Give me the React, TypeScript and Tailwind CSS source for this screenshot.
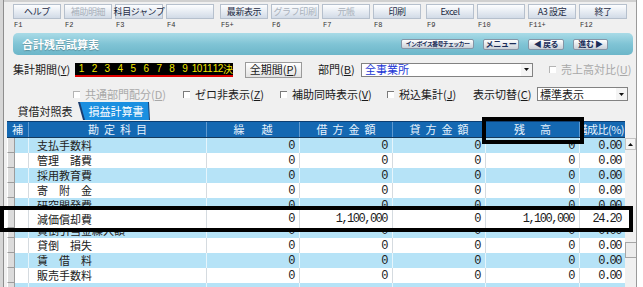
import React from 'react';

const jp = "font-['Noto_Sans_CJK_JP',sans-serif]";
const mono = "font-['Liberation_Mono',monospace]";
const sans = "font-['Liberation_Sans',sans-serif]";

type Key = { l: string; f: string; d?: boolean };

const groups: Key[][] = [
    [{ l: 'ヘルプ', f: 'F1' }, { l: '補助明細', f: 'F2', d: true }, { l: '科目ジャンプ', f: 'F3' }, { l: '', f: 'F4' }],
    [{ l: '最新表示', f: 'F5+' }, { l: 'グラフ印刷', f: 'F6', d: true }, { l: '元帳', f: 'F7', d: true }, { l: '印刷', f: 'F8' }],
    [{ l: 'Excel', f: 'F9' }, { l: '', f: 'F10' }, { l: 'A3 設定', f: 'F11+' }, { l: '終了', f: 'F12' }],
];

type Row = { name: string; kuri: string; kari: string; kashi: string; zan: string; ratio: string };

const zero = (name: string): Row => ({ name, kuri: '0', kari: '0', kashi: '0', zan: '0', ratio: '0.00' });

const before = [zero('支払手数料'), zero('管理　諸費'), zero('採用教育費'), zero('寄　附　金')];
const kenkyu = zero('研究開発費');
const genka: Row = { name: '減価償却費', kuri: '0', kari: '1,100,000', kashi: '0', zan: '1,100,000', ratio: '24.20' };
const kashidaore = zero('貸倒引当金繰入額');
const after = [zero('貸倒　損失'), zero('賃　借　料'), zero('販売手数料')];

function Toolbar() {
    return (
        <div className="flex shrink-0 pl-[9px] pt-[2px]">
            {groups.map((g, gi) => (
                <div key={gi} className={gi === 1 ? 'ml-[6px] flex gap-[3px]' : gi === 2 ? 'ml-[5px] flex gap-[3px]' : 'flex gap-[3px]'}>
                    {g.map((b) => (
                        <div key={b.f} className="flex w-[48px] flex-col">
                            <div
                                className={`flex h-[15px] items-center justify-center whitespace-nowrap border border-[#b6c0cd] bg-linear-to-b from-[#fdfeff] to-[#d2dbe7] text-[9px] leading-none tracking-[-0.4px] ${
                                    b.d ? 'text-[#a9b1bb]' : 'text-[#1d2b44]'
                                }`}
                            >
                                {b.l}
                            </div>
                            <div className={`mt-[2px] pl-[1px] text-[7px] leading-[8px] text-[#333] ${mono}`}>{b.f}</div>
                        </div>
                    ))}
                </div>
            ))}
        </div>
    );
}

function NavButton({ children, w, small }: { children: React.ReactNode; w: string; small?: boolean }) {
    return (
        <div
            className={`flex items-center justify-center overflow-hidden whitespace-nowrap rounded-[2px] border border-[#8595a6] bg-linear-to-b from-white to-[#c9d0d8] font-bold leading-none text-[#1b2d58] ${w} ${
                small ? 'h-[10px] text-[6px] tracking-[-0.7px]' : 'h-[11px] text-[8px] tracking-[-0.3px]'
            }`}
        >
            {children}
        </div>
    );
}

function TitleBar() {
    return (
        <div className="ml-[9px] mt-[4px] flex h-[22px] w-[620px] shrink-0 items-center rounded-[5px] bg-linear-to-b from-[#a9dbe7] via-[#80c4d5] to-[#6cb6c9] pl-[9px] pr-[25px]">
            <span className="text-[11px] font-bold text-white [text-shadow:0_1px_1px_rgba(0,0,0,0.25)]">合計残高試算表</span>
            <div className="ml-auto flex items-center gap-[9px]">
                <NavButton w="w-[73px]" small>
                    インボイス番号チェッカー
                </NavButton>
                <NavButton w="w-[36px]">メニュー</NavButton>
                <NavButton w="w-[36px]">◀ 戻る</NavButton>
                <NavButton w="w-[35px]">進む ▶</NavButton>
            </div>
        </div>
    );
}

function Check({ off }: { off?: boolean }) {
    return (
        <span
            className={`mr-[5px] inline-block h-[7px] w-[7px] shrink-0 border-l border-t bg-white ${
                off ? 'border-[#b4b4b4]' : 'border-[#7a7a7a]'
            }`}
        />
    );
}

function Arrow() {
    return (
        <div className="flex h-full w-[11px] items-center justify-center bg-[#f4f4f4]">
            <svg width="5" height="3" viewBox="0 0 5 3">
                <path d="M0 0h5L2.5 3z" fill="#111" />
            </svg>
        </div>
    );
}

function PeriodRow() {
    return (
        <div className="mt-[6px] flex h-[17px] shrink-0 items-center pl-[9px] text-[11px] leading-none">
            <span className="w-[62px]">
                集計期間(<u>Y</u>)
            </span>
            <div className={`flex h-[14px] w-[158px] items-center border-b-2 border-[#e00000] bg-black text-[10px] leading-none text-[#f0e400] ${sans}`}>
                {['1', '2', '3', '4', '5', '6', '7', '8', '9'].map((d) => (
                    <span key={d} className="w-[13px] text-center">
                        {d}
                    </span>
                ))}
                {['10', '11', '12'].map((d) => (
                    <span key={d} className="w-[10.5px] text-center tracking-[-0.5px]">
                        {d}
                    </span>
                ))}
                <span className={`w-[10px] text-center ${jp}`}>決</span>
            </div>
            <div className="ml-[12px] flex h-[16px] w-[57px] items-center justify-center border border-[#9a9a9a] bg-linear-to-b from-white to-[#e2e2e2]">
                全期間(<u>P</u>)
            </div>
            <span className="ml-[16px] w-[43px]">
                部門(<u>B</u>)
            </span>
            <div className="flex h-[14px] w-[172px] items-center border border-[#828282] bg-white">
                <span className="flex-1 pl-[3px] text-[#2236d6]">全事業所</span>
                <Arrow />
            </div>
            <span className="ml-[16px] flex items-center text-[#a8a8a8]">
                <Check off />
                売上高対比(<u>U</u>)
            </span>
        </div>
    );
}

function OptionRow() {
    return (
        <div className="mt-[9px] flex h-[14px] shrink-0 items-center pl-[69px] text-[11px] leading-none">
            <span className="flex w-[110px] items-center text-[#a8a8a8]">
                <Check off />
                共通部門配分(<u>D</u>)
            </span>
            <span className="flex w-[97px] items-center">
                <Check />
                ゼロ非表示(<u>Z</u>)
            </span>
            <span className="flex w-[107px] items-center">
                <Check />
                補助同時表示(<u>V</u>)
            </span>
            <span className="flex w-[86px] items-center">
                <Check />
                税込集計(<u>J</u>)
            </span>
            <span className="w-[64px]">
                表示切替(<u>C</u>)
            </span>
            <div className="flex h-[14px] w-[91px] items-center border border-[#828282] bg-white">
                <span className="flex-1 pl-[2px]">標準表示</span>
                <Arrow />
            </div>
        </div>
    );
}

function Tabs() {
    return (
        <div className="mt-[1px] flex h-[18px] shrink-0 items-stretch pl-[8px] text-[11px] leading-none">
            <div className="flex w-[66px] items-center justify-center text-[#222]">貸借対照表</div>
            <div className="relative w-[72px] bg-[#1a3d70] [clip-path:polygon(0_0,71px_0,72px_100%,5px_100%)]">
                <div className="absolute inset-0 flex items-center justify-center pl-[4px] text-white bg-[#1b8fe0] [clip-path:polygon(2px_0,70px_0,71px_100%,7px_100%)]">
                    損益計算書
                </div>
            </div>
        </div>
    );
}

function Header() {
    const cell = 'flex h-full items-center justify-center border-r border-[#5f99cf]';
    return (
        <div className="flex h-[17px] shrink-0 border-b border-t border-b-[#163a5c] border-t-[#0c3e72] bg-[#1468b2] text-[11px] leading-none text-[#e6f2fd]">
            <div className={`w-[22px] ${cell}`}>補</div>
            <div className={`w-[178px] pl-[5px] tracking-[5px] ${cell}`}>勘定科目</div>
            <div className={`w-[93px] pl-[3px] tracking-[3px] ${cell}`}>繰　越</div>
            <div className={`w-[93px] pl-[5px] tracking-[5px] ${cell}`}>借方金額</div>
            <div className={`w-[93px] pl-[5px] tracking-[5px] ${cell}`}>貸方金額</div>
            <div className={`w-[94px] pl-[2px] tracking-[2px] ${cell}`}>残　高</div>
            <div className="flex h-full w-[45px] items-center justify-end overflow-hidden whitespace-nowrap pr-[1px] tracking-[-0.5px]">構成比(%)</div>
        </div>
    );
}

function DataRow({ r, blue, tall }: { r: Row; blue: boolean; tall?: boolean }) {
    const line = blue ? 'border-[#e6f5fc]' : 'border-[#d5dbe0]';
    const num = `flex h-full items-center justify-end border-r pr-[5px] text-[12px] tracking-[-1.5px] text-[#1c1c1c] ${mono} ${line}`;
    return (
        <div className={`flex shrink-0 leading-none ${tall ? 'h-full' : 'h-[15px]'} ${blue ? 'bg-[#b6e3f7]' : 'bg-white'}`}>
            <div className="h-full w-[8px] border-b border-l border-r border-b-[#9c9c9c] border-l-white border-r-[#9c9c9c] bg-[#dcdcdc]" />
            <div className={`h-full w-[14px] border-r ${line}`} />
            <div className={`flex h-full w-[178px] items-center whitespace-nowrap border-r pl-[8px] text-[11px] text-[#222] ${line}`}>{r.name}</div>
            <div className={`w-[93px] ${num}`}>{r.kuri}</div>
            <div className={`w-[93px] ${num}`}>{r.kari}</div>
            <div className={`w-[93px] ${num}`}>{r.kashi}</div>
            <div className={`w-[94px] ${num}`}>{r.zan}</div>
            <div className={`flex h-full w-[45px] items-center justify-end pr-[4px] text-[12px] tracking-[-1.5px] text-[#1c1c1c] ${mono}`}>{r.ratio}</div>
        </div>
    );
}

function Grid() {
    return (
        <div className="ml-[3px] mt-[1px] flex shrink-0">
            <div className="flex w-[618px] flex-col">
                <Header />
                {before.map((r, i) => (
                    <DataRow key={r.name} r={r} blue={i % 2 === 0} />
                ))}
                <div className="h-[8px] shrink-0 overflow-hidden">
                    <DataRow r={kenkyu} blue />
                </div>
                <div className="relative z-10 -ml-[7px] h-[26px] w-[633px] shrink-0 border-[4px] border-black bg-white pl-[3px]">
                    <DataRow r={genka} blue={false} tall />
                </div>
                <div className="flex h-[6px] shrink-0 flex-col justify-end overflow-hidden">
                    <DataRow r={kashidaore} blue />
                </div>
                {after.map((r, i) => (
                    <DataRow key={r.name} r={r} blue={i % 2 === 1} />
                ))}
                <DataRow r={{ name: '', kuri: '', kari: '', kashi: '', zan: '', ratio: '' }} blue />
            </div>
            <div className="flex w-[11px] flex-col">
                <div className="h-[17px] shrink-0" />
                <div className="flex h-[12px] shrink-0 items-center justify-center border border-[#c4c4c4] bg-[#f4f4f4]">
                    <svg width="5" height="3" viewBox="0 0 5 3">
                        <path d="M2.5 0L5 3H0z" fill="#111" />
                    </svg>
                </div>
                <div className="flex-1 bg-[#f0f0f0]">
                    <div className="mt-[92px] h-[16px] border border-r-0 border-[#a6a6a6] bg-[#ececec]" />
                </div>
            </div>
        </div>
    );
}

export default function App() {
    return (
        <div className={`relative flex h-[287px] w-[643px] overflow-hidden bg-[#f0f0f0] text-[#1a1a1a] ${jp}`}>
            <div className="h-full w-[4px] shrink-0 border-r border-[#8e8e8e] bg-[#d6d6d6]" />
            <main className="flex w-[632px] shrink-0 flex-col border-t-[2px] border-[#d0d0d0]">
                <Toolbar />
                <TitleBar />
                <PeriodRow />
                <OptionRow />
                <Tabs />
                <Grid />
            </main>
            <div className="h-full w-[7px] shrink-0 border-l border-[#9a9a9a] bg-white" />
            <div className="pointer-events-none absolute left-[482px] top-[117px] z-20 h-[27px] w-[102px] border-[4px] border-black" />
        </div>
    );
}
